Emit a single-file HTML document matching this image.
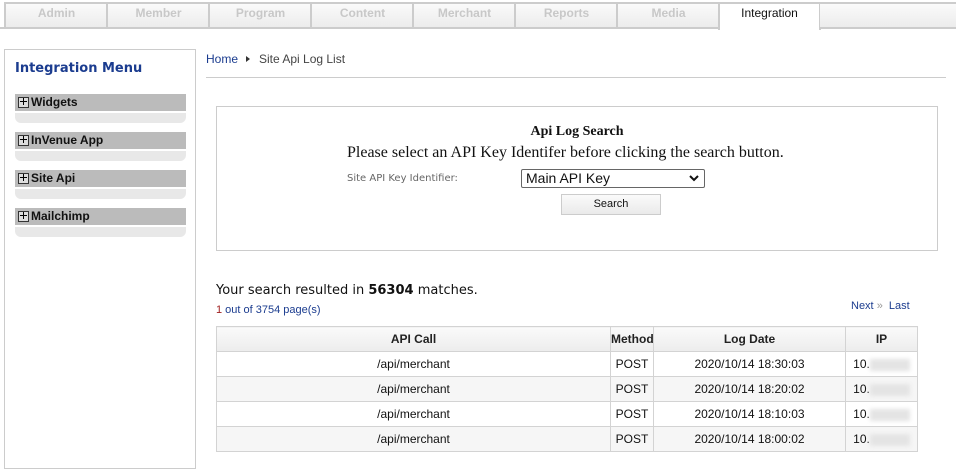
<!DOCTYPE html>
<html><head><style>
*{margin:0;padding:0;box-sizing:border-box}
body{width:956px;height:450px;overflow:hidden;background:#fff;font-family:"Liberation Sans",sans-serif;position:relative}
.tab{position:absolute;top:2px;height:27px;width:103px;border:2px solid #ccc;border-right:none;background:linear-gradient(#fafafa,#ececec);color:#c8c8c8;font-weight:bold;font-size:12px;text-align:center;line-height:19px}
.abs{position:absolute}
.bar{position:absolute;left:15px;width:171px;height:17px;background:#bbb;font:bold 12px "Liberation Sans",sans-serif;color:#111;line-height:17px;padding-left:16px}
.bar:before{content:"";position:absolute;left:3px;top:3px;width:9px;height:9px;border:1px solid #333;background:#ddd}
.bar i{position:absolute;left:5px;top:7px;width:7px;height:1px;background:#000}
.bar b{position:absolute;left:8px;top:4px;width:1px;height:7px;background:#000}
.sub{position:absolute;left:15px;width:171px;height:10px;background:#e8e8e8;border-radius:0 0 6px 6px}
table{position:absolute;left:216px;top:326px;border-collapse:collapse;font-size:12px;color:#111;table-layout:fixed}
td,th{border:1px solid #d3d3d3;text-align:center;height:25px;font-weight:normal}
th{background:linear-gradient(#fafafa,#ececec);font-weight:bold;color:#222}
tr:nth-child(odd) td{background:#f6f6f6}
.ip{display:inline-block;width:40px;height:12px;background:#e4e4e4;filter:blur(2px);vertical-align:middle}
</style></head><body>
<div class="abs" style="left:0;top:27px;width:956px;height:2px;background:#ccc"></div>
<div class="tab" style="left:4px">Admin</div>
<div class="tab" style="left:106px">Member</div>
<div class="tab" style="left:208px">Program</div>
<div class="tab" style="left:310px">Content</div>
<div class="tab" style="left:412px">Merchant</div>
<div class="tab" style="left:514px">Reports</div>
<div class="tab" style="left:616px">Media</div>
<div class="tab" style="left:718px;background:#fff;color:#111;font-weight:normal;border-bottom:none;height:28px;border-right:2px solid #ccc">Integration</div>
<div class="tab" style="left:820px;width:136px;border-left:none"></div>

<div class="abs" style="left:4px;top:49px;width:192px;height:420px;border:1px solid #ccc"></div>
<div class="abs" style="left:15px;top:61px;font:bold 13px 'DejaVu Sans',sans-serif;color:#1b3c8f">Integration Menu</div>
<div class="bar" style="top:94px"><i></i><b></b>Widgets</div><div class="sub" style="top:113px"></div>
<div class="bar" style="top:132px"><i></i><b></b>InVenue App</div><div class="sub" style="top:151px"></div>
<div class="bar" style="top:170px"><i></i><b></b>Site Api</div><div class="sub" style="top:189px"></div>
<div class="bar" style="top:208px"><i></i><b></b>Mailchimp</div><div class="sub" style="top:227px"></div>

<div class="abs" style="left:206px;top:52px;font-size:12px;color:#1b3c8f">Home</div>
<div class="abs" style="left:246px;top:56px;width:0;height:0;border-left:4px solid #333;border-top:3px solid transparent;border-bottom:3px solid transparent"></div>
<div class="abs" style="left:259px;top:52px;font-size:12px;color:#444">Site Api Log List</div>
<div class="abs" style="left:206px;top:77px;width:740px;height:1px;background:#ccc"></div>

<div class="abs" style="left:216px;top:106px;width:722px;height:145px;border:1px solid #ccc"></div>
<div class="abs" style="left:216px;top:124px;width:722px;text-align:center;font:bold 14px 'Liberation Serif',serif;color:#111">Api Log Search</div>
<div class="abs" style="left:347px;top:144px;font:16px 'Liberation Serif',serif;color:#111;white-space:nowrap">Please select an API Key Identifer before clicking the search button.</div>
<div class="abs" style="left:347px;top:173px;font:10px 'DejaVu Sans',sans-serif;color:#666">Site API Key Identifier:</div>
<div class="abs" style="left:521px;top:169px;width:184px;height:19px;border:1px solid #666;border-radius:2px;font-size:14px;line-height:17px;padding-left:4px;color:#111">Main API Key<svg style="position:absolute;right:5px;top:5px" width="10" height="7" viewBox="0 0 10 7"><path d="M1 1L5 5L9 1" stroke="#111" stroke-width="2" fill="none"/></svg></div>
<div class="abs" style="left:561px;top:194px;width:100px;height:21px;border:1px solid #ccc;background:linear-gradient(#fafafa,#eaeaea);font-size:11px;text-align:center;line-height:19px;color:#111">Search</div>

<div class="abs" style="left:216px;top:283px;font:13px 'DejaVu Sans',sans-serif;color:#111">Your search resulted in <b>56304</b> matches.</div>
<div class="abs" style="left:216px;top:304px;font-size:11px;color:#1b3c8f"><span style="color:#a02020">1</span> out of 3754 page(s)</div>
<div class="abs" style="left:851px;top:300px;font-size:11px;color:#1b3c8f">Next <span style="color:#999">»</span>&nbsp; Last</div>

<table style="width:701px">
<tr><th style="width:394px">API Call</th><th style="width:43px">Method</th><th style="width:192px">Log Date</th><th style="width:72px">IP</th></tr>
<tr><td>/api/merchant</td><td>POST</td><td>2020/10/14 18:30:03</td><td>10.<span class="ip"></span></td></tr>
<tr><td>/api/merchant</td><td>POST</td><td>2020/10/14 18:20:02</td><td>10.<span class="ip"></span></td></tr>
<tr><td>/api/merchant</td><td>POST</td><td>2020/10/14 18:10:03</td><td>10.<span class="ip"></span></td></tr>
<tr><td>/api/merchant</td><td>POST</td><td>2020/10/14 18:00:02</td><td>10.<span class="ip"></span></td></tr>
</table>
</body></html>
